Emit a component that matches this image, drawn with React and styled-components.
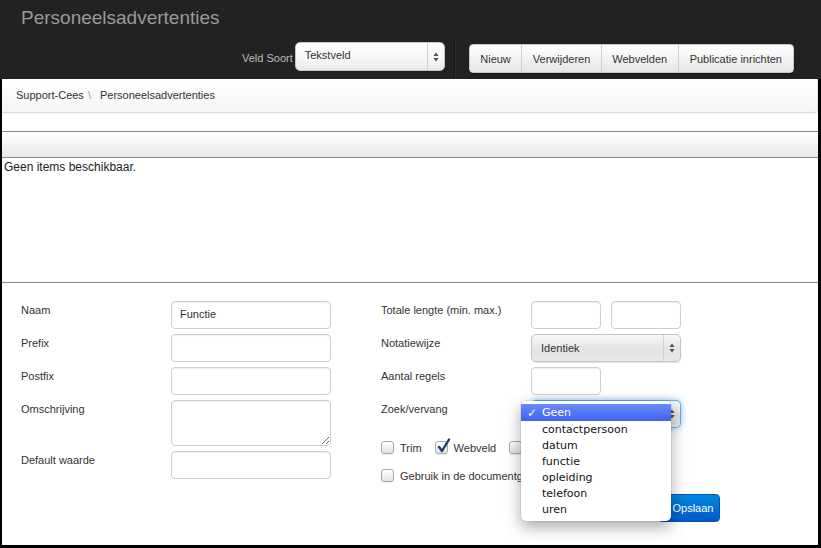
import React from 'react';
import styled, { createGlobalStyle } from 'styled-components';

const GlobalStyle = createGlobalStyle`
  html, body { margin: 0; padding: 0; background: #000; }
  body { font-family: "Liberation Sans", Arial, sans-serif; }
  * { box-sizing: border-box; }
`;

const Page = styled.div`
  width: 821px;
  height: 548px;
  background: #000;
  display: flex;
  flex-direction: column;
  overflow: hidden;
`;

const Header = styled.header`
  height: 79px;
  flex-shrink: 0;
  background: #222;
  display: flex;
  flex-direction: column;
`;

const Title = styled.h1`
  margin: 0;
  height: 35px;
  padding: 7px 0 0 21px;
  font-weight: normal;
  font-size: 19px;
  line-height: 22px;
  color: #999;
`;

const Toolbar = styled.div`
  flex: 1;
  display: flex;
  align-items: flex-start;
  justify-content: flex-end;
  padding-right: 27px;
`;

const ToolLabel = styled.span`
  margin-top: 16px;
  margin-right: 2px;
  font-size: 11px;
  line-height: 14px;
  color: #bbb;
`;

const SelectBox = styled.div`
  width: ${p => p.$w || 150}px;
  height: ${p => p.$h || 28}px;
  margin-top: ${p => p.$mt || 0}px;
  display: flex;
  align-items: stretch;
  border: 1px solid ${p => (p.$focus ? 'rgba(82,168,236,0.9)' : '#c4c4c4')};
  border-radius: 5px;
  background: ${p =>
    p.$grey
      ? 'linear-gradient(#f8f8f8, #e4e4e4 55%, #e9e9e9)'
      : 'linear-gradient(#ffffff, #f6f6f6 60%, #e9e9e9)'};
  box-shadow: ${p =>
    p.$focus ? '0 0 6px rgba(82,168,236,0.7)' : '0 1px 1px rgba(0,0,0,0.12)'};
  font-size: 11px;
  color: #333;
`;

const SelectValue = styled.span`
  flex: 1;
  display: flex;
  align-items: center;
  padding-left: 9px;
  padding-bottom: ${p => p.$pb || 0}px;
`;

const SelectArrow = styled.span`
  width: 17px;
  display: flex;
  align-items: center;
  justify-content: center;
  border-left: 1px solid #d0d0d0;
`;

const Divider = styled.div`
  width: 2px;
  align-self: stretch;
  margin: 5px 13px 0 9px;
  border-left: 1px solid #171717;
  border-right: 1px solid #2b2b2b;
`;

const ButtonGroup = styled.div`
  margin-top: 9px;
  height: 29px;
  display: flex;
  border-radius: 4px;
  border: 1px solid #c8c8c8;
  background: linear-gradient(#ffffff, #e6e6e6);
  box-shadow: 0 1px 2px rgba(0, 0, 0, 0.3);
  overflow: hidden;
`;

const GroupButton = styled.button`
  height: 100%;
  padding: 0 ${p => p.$px || 10}px;
  border: none;
  border-left: ${p => (p.$first ? 'none' : '1px solid #cfcfcf')};
  background: transparent;
  font-family: "Liberation Sans", Arial, sans-serif;
  font-size: 11px;
  color: #333;
`;

const Body = styled.main`
  position: relative;
  flex: 1;
  margin: 0 3px 3px 2px;
  background: #fff;
  display: flex;
  flex-direction: column;
`;

const Breadcrumb = styled.nav`
  height: 34px;
  flex-shrink: 0;
  display: flex;
  align-items: center;
  padding: 0 0 1px 14px;
  background: linear-gradient(#ffffff, #f5f5f5);
  border-bottom: 1px solid #dcdcdc;
  border-right: 1px solid #e4e4e4;
  border-bottom-right-radius: 3px;
  box-shadow: 1px 1px 1px rgba(0,0,0,0.04);
  font-size: 11px;
  color: #333;
`;

const Crumb = styled.span``;

const CrumbSep = styled.span`
  padding: 0 9px 0 4px;
  color: #999;
`;

const Spacer = styled.div`
  height: 18px;
  flex-shrink: 0;
`;

const ListHead = styled.div`
  height: 27px;
  flex-shrink: 0;
  border-top: 1px solid #888;
  border-bottom: 1px solid #888;
  background: linear-gradient(#ffffff, #e8e8e8);
`;

const ListContent = styled.div`
  height: 125px;
  flex-shrink: 0;
  padding: 2px 2px;
  border-bottom: 1px solid #888;
  font-size: 12px;
  line-height: 14px;
  color: #222;
`;

const Form = styled.div`
  display: flex;
  padding: 18px 0 0 19px;
`;

const Column = styled.div`
  width: ${p => p.$w}px;
  display: flex;
  flex-direction: column;
  gap: 5px;
`;

const Row = styled.div`
  display: flex;
  align-items: flex-start;
`;

const Label = styled.label`
  width: 150px;
  flex-shrink: 0;
  padding-top: 2px;
  font-size: 11px;
  line-height: 14px;
  color: #333;
`;

const TextInput = styled.input`
  width: ${p => p.$w || 160}px;
  height: 28px;
  margin-right: ${p => p.$mr || 0}px;
  padding: 0 8px 2px;
  border: 1px solid #cfcfcf;
  border-radius: 4px;
  box-shadow: inset 0 1px 1px rgba(0, 0, 0, 0.07);
  font-family: "Liberation Sans", Arial, sans-serif;
  font-size: 11px;
  color: #333;
  background: #fff;
  outline: none;
`;

const TextArea = styled.textarea`
  width: 160px;
  height: 46px;
  padding: 4px 8px;
  border: 1px solid #cfcfcf;
  border-radius: 4px;
  box-shadow: inset 0 1px 1px rgba(0, 0, 0, 0.07);
  font-family: "Liberation Sans", Arial, sans-serif;
  font-size: 11px;
  resize: both;
  outline: none;
`;

const CheckRow = styled.div`
  display: flex;
  align-items: center;
  margin-top: ${p => p.$mt}px;
  height: 13px;
`;

const CheckItem = styled.span`
  display: flex;
  align-items: center;
  margin-right: 13px;
  font-size: 11px;
  color: #333;
`;

const Box = styled.span`
  position: relative;
  width: 13px;
  height: 13px;
  margin-right: 6px;
  border: 1px solid #a9a9a9;
  border-radius: 3px;
  background: linear-gradient(#ffffff, #e3e3e3);
  box-shadow: 0 1px 1px rgba(0,0,0,0.08);
`;

const Tick = styled.svg`
  position: absolute;
  left: 1px;
  top: -4px;
`;

const SaveRow = styled.div`
  margin-top: 7px;
  padding-left: 277px;
`;

const PrimaryButton = styled.button`
  width: 62px;
  height: 28px;
  border: 1px solid #0055b8;
  border-radius: 4px;
  background: linear-gradient(#0088dd, #0058cc);
  font-family: "Liberation Sans", Arial, sans-serif;
  font-size: 11px;
  color: #fff;
  padding: 0 0 0 8px;
`;

const Menu = styled.ul`
  position: absolute;
  left: 519px;
  top: 322px;
  width: 150px;
  height: 120px;
  margin: 0;
  padding: 3px 0 0;
  list-style: none;
  background: #fff;
  border-radius: 5px;
  box-shadow: 0 6px 16px rgba(0, 0, 0, 0.35), 0 0 0 1px rgba(0,0,0,0.06);
  font-family: "DejaVu Sans", "Lucida Grande", sans-serif;
  font-size: 11px;
`;

const MenuItem = styled.li`
  display: flex;
  align-items: center;
  padding-left: 21px;
  position: relative;
  color: ${p => (p.$active ? '#fff' : '#111')};
  background: ${p => (p.$active ? 'linear-gradient(#6a8cf8, #3c61ee)' : 'transparent')};
  height: ${p => (p.$active ? 17 : 16)}px;
`;

const Check = styled.span`
  position: absolute;
  left: 6px;
  font-size: 12px;
`;

const Arrows = ({ color = '#555' }) => (
  <svg width="6" height="10" viewBox="0 0 6 10">
    <path d="M3 0.5 L5.6 4 L0.4 4 Z" fill={color} />
    <path d="M3 9.5 L5.6 6 L0.4 6 Z" fill={color} />
  </svg>
);

const CheckBox = ({ checked, label }) => (
  <CheckItem>
    <Box>
      {checked && (
        <Tick width="14" height="16" viewBox="0 0 14 16">
          <path d="M2 9 L5 13 L12 1.5" fill="none" stroke="#1f3f72" strokeWidth="2.4" strokeLinecap="round" strokeLinejoin="round" />
        </Tick>
      )}
    </Box>
    {label}
  </CheckItem>
);

const options = ['Geen', 'contactpersoon', 'datum', 'functie', 'opleiding', 'telefoon', 'uren'];

export default function App() {
  return (
    <Page>
      <GlobalStyle />
      <Header>
        <Title>Personeelsadvertenties</Title>
        <Toolbar>
          <ToolLabel>Veld Soort</ToolLabel>
          <SelectBox $w={150} $h={29} $mt={7}>
            <SelectValue $pb={3}>Tekstveld</SelectValue>
            <SelectArrow><Arrows /></SelectArrow>
          </SelectBox>
          <Divider />
          <ButtonGroup>
            <GroupButton $first $px={10.5}>Nieuw</GroupButton>
            <GroupButton $px={10.5}>Verwijderen</GroupButton>
            <GroupButton $px={10.5}>Webvelden</GroupButton>
            <GroupButton $px={11}>Publicatie inrichten</GroupButton>
          </ButtonGroup>
        </Toolbar>
      </Header>
      <Body>
        <Breadcrumb>
          <Crumb>Support-Cees</Crumb>
          <CrumbSep>\</CrumbSep>
          <Crumb>Personeelsadvertenties</Crumb>
        </Breadcrumb>
        <Spacer />
        <ListHead />
        <ListContent>Geen items beschikbaar.</ListContent>
        <Form>
          <Column $w={360}>
            <Row>
              <Label>Naam</Label>
              <TextInput defaultValue="Functie" />
            </Row>
            <Row>
              <Label>Prefix</Label>
              <TextInput />
            </Row>
            <Row>
              <Label>Postfix</Label>
              <TextInput />
            </Row>
            <Row>
              <Label>Omschrijving</Label>
              <TextArea />
            </Row>
            <Row>
              <Label>Default waarde</Label>
              <TextInput />
            </Row>
          </Column>
          <Column $w={420}>
            <Row>
              <Label>Totale lengte (min. max.)</Label>
              <TextInput $w={70} $mr={10} />
              <TextInput $w={70} />
            </Row>
            <Row>
              <Label>Notatiewijze</Label>
              <SelectBox $grey>
                <SelectValue>Identiek</SelectValue>
                <SelectArrow><Arrows /></SelectArrow>
              </SelectBox>
            </Row>
            <Row>
              <Label>Aantal regels</Label>
              <TextInput $w={70} />
            </Row>
            <Row>
              <Label>Zoek/vervang</Label>
              <SelectBox $grey $focus>
                <SelectValue>Geen</SelectValue>
                <SelectArrow><Arrows /></SelectArrow>
              </SelectBox>
            </Row>
            <CheckRow $mt={8}>
              <CheckBox label="Trim" />
              <CheckBox checked label="Webveld" />
              <CheckBox label="Verplicht" />
            </CheckRow>
            <CheckRow $mt={10}>
              <CheckBox label="Gebruik in de documentgenerator" />
            </CheckRow>
            <SaveRow>
              <PrimaryButton>Opslaan</PrimaryButton>
            </SaveRow>
          </Column>
        </Form>
        <Menu>
          {options.map((o, i) => (
            <MenuItem key={o} $active={i === 0}>
              {i === 0 && <Check>✓</Check>}
              {o}
            </MenuItem>
          ))}
        </Menu>
      </Body>
    </Page>
  );
}
